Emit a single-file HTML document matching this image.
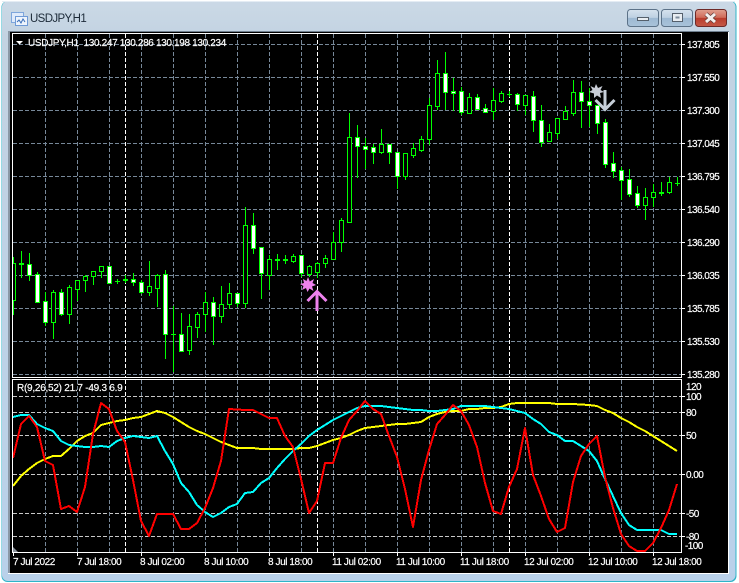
<!DOCTYPE html>
<html><head><meta charset="utf-8"><title>USDJPY,H1</title>
<style>
html,body{margin:0;padding:0;background:#fff;width:739px;height:583px;overflow:hidden}
svg{display:block;position:absolute;left:0;top:0}
text{font-family:"Liberation Sans",sans-serif;font-size:10px;fill:#fff;stroke:#fff;stroke-width:.18px;letter-spacing:-.42px}
.n{letter-spacing:-.55px}
</style></head><body>
<svg width="739" height="583" viewBox="0 0 739 583" xmlns="http://www.w3.org/2000/svg">
<defs>
<linearGradient id="tb" x1="0" y1="0" x2="0" y2="1"><stop offset="0" stop-color="#cbd9e6"/><stop offset=".06" stop-color="#c3d3e2"/><stop offset="1" stop-color="#b9d1ea"/></linearGradient>
<linearGradient id="bt" x1="0" y1="0" x2="0" y2="1"><stop offset="0" stop-color="#d6e2ee"/><stop offset=".48" stop-color="#bdd0e2"/><stop offset=".5" stop-color="#9db8d2"/><stop offset="1" stop-color="#a9c3da"/></linearGradient>
<linearGradient id="cl" x1="0" y1="0" x2="0" y2="1"><stop offset="0" stop-color="#e0a090"/><stop offset=".48" stop-color="#cf6a58"/><stop offset=".5" stop-color="#b93c2c"/><stop offset="1" stop-color="#c55a48"/></linearGradient>
<clipPath id="main"><rect x="13" y="34" width="668" height="343"/></clipPath>
<clipPath id="sub"><rect x="13" y="380" width="668" height="172"/></clipPath>
</defs>
<rect x="1.5" y="1" width="735" height="581" rx="6" fill="#2fb4c8"/>
<rect x="2" y="1" width="733.5" height="580" rx="6" fill="url(#tb)"/>
<rect x="2" y="1" width="733" height="1" fill="#e4ecf4"/>
<rect x="8" y="31" width="721" height="543" fill="#fff"/>
<rect x="8" y="31" width="721" height="1" fill="#6f7f8f"/>
<rect x="8" y="31" width="2" height="542" fill="#8a98a6"/>
<rect x="10" y="32" width="718" height="541" fill="#000"/>

<!-- title icon -->
<rect x="11.5" y="12.5" width="12" height="10" fill="#dfeafa" stroke="#7ea6dc"/>
<rect x="15.5" y="16.5" width="12" height="9" fill="#eef4fc" stroke="#6f9ad6"/>
<path d="M17 22l2-2 2 3 2-4 2 3" fill="none" stroke="#3a6eb8" stroke-width="1"/>
<text x="30" y="22" style="font-size:11.5px;fill:#1c2a38;stroke:none;letter-spacing:-.63px">USDJPY,H1</text>

<!-- window buttons -->
<rect x="627.5" y="9.5" width="31" height="17" rx="3" fill="url(#bt)" stroke="#5c7288"/>
<rect x="637.5" y="17.5" width="11" height="3" fill="#e8edf2" stroke="#55606c"/>
<rect x="661.5" y="9.5" width="31" height="17" rx="3" fill="url(#bt)" stroke="#5c7288"/>
<rect x="672.5" y="13.5" width="10" height="8" fill="#e8edf2" stroke="#55606c"/>
<rect x="675.5" y="16.5" width="4" height="2" fill="#7d8c9c"/>
<rect x="695.5" y="9.5" width="31" height="17" rx="3" fill="url(#cl)" stroke="#6e2a28"/>
<path d="M706 14l9 8M715 14l-9 8" stroke="#5c3a36" stroke-width="4.4" fill="none"/>
<path d="M706 14l9 8M715 14l-9 8" stroke="#f4f0ee" stroke-width="3" fill="none"/>

<!-- main grid -->
<g shape-rendering="crispEdges" fill="none" stroke-width="1">
<path clip-path="url(#main)" stroke="#778899" stroke-dasharray="4 2" d="M13 44.5H681M13 77.5H681M13 110.5H681M13 143.5H681M13 176.5H681M13 209.5H681M13 242.5H681M13 275.5H681M13 308.5H681M13 341.5H681M13 374.5H681M45.5 34V377M77.5 34V377M109.5 34V377M141.5 34V377M173.5 34V377M205.5 34V377M237.5 34V377M269.5 34V377M301.5 34V377M333.5 34V377M365.5 34V377M397.5 34V377M429.5 34V377M461.5 34V377M493.5 34V377M525.5 34V377M557.5 34V377M589.5 34V377M621.5 34V377M653.5 34V377"/>
<path clip-path="url(#main)" stroke="#fff" stroke-dasharray="4 2" d="M125.5 34V377M317.5 34V377M509.5 34V377"/>
<path clip-path="url(#sub)" stroke="#c8c8c8" stroke-dasharray="4 2" d="M13 396.5H681M13 412.5H681M13 435.5H681M13 474.5H681M13 513.5H681M13 536.5H681"/>
<path clip-path="url(#sub)" stroke="#778899" stroke-dasharray="4 2" d="M45.5 380V552M77.5 380V552M109.5 380V552M141.5 380V552M173.5 380V552M205.5 380V552M237.5 380V552M269.5 380V552M301.5 380V552M333.5 380V552M365.5 380V552M397.5 380V552M429.5 380V552M461.5 380V552M493.5 380V552M525.5 380V552M557.5 380V552M589.5 380V552M621.5 380V552M653.5 380V552"/>
<path clip-path="url(#sub)" stroke="#fff" stroke-dasharray="4 2" d="M125.5 380V552M317.5 380V552M509.5 380V552"/>

<!-- wicks -->
<g clip-path="url(#main)">
<path stroke="#0f0" d="M13.5 257V315M21.5 251V278M29.5 253V281M37.5 272V303M45.5 292V326M53.5 290V339M61.5 289V316M69.5 285V324M77.5 280V301M85.5 275V292M93.5 271V285M101.5 266V278M109.5 266V283M117.5 279V284M115 281.5H120M125.5 275V283M133.5 273V286M141.5 280V294M149.5 261V296M157.5 274V307M165.5 270V359M173.5 306V372M171 334.5H176M181.5 313V352M189.5 314V355M197.5 312V338M205.5 292V332M213.5 297V345M221.5 286V323M229.5 283V309M237.5 293V307M245.5 207V308M253.5 213V254M261.5 247V299M269.5 255V290M277.5 254V270M285.5 255V264M293.5 254V263M301.5 255V277M309.5 265V277M317.5 262V278M325.5 255V268M333.5 232V259M341.5 218V252M349.5 113V222M357.5 125V178M365.5 138V169M373.5 144V164M381.5 129V154M389.5 144V164M397.5 152V189M405.5 153V180M413.5 143V158M421.5 136V152M429.5 98V145M437.5 60V110M445.5 52V110M453.5 78V111M461.5 87V115M469.5 93V113M477.5 94V109M485.5 104V113M493.5 88V120M501.5 91V103M509.5 91V97M507 94.5H512M517.5 93V111M525.5 95V115M533.5 91V132M541.5 105V147M549.5 124V142M557.5 118V139M565.5 106V119M573.5 80V116M581.5 81V128M589.5 88V127M597.5 105V134M605.5 119V168M613.5 152V178M621.5 167V200M629.5 169V197M637.5 186V208M645.5 188V220M653.5 184V207M661.5 182V196M669.5 177V194M677.5 177V186M675 183.5H680"/>
<!-- bull bodies -->
<path stroke="#0f0" fill="#000" d="M11.5 263.5h4v37h-4zM51.5 292.5h4v30h-4zM67.5 287.5h4v27h-4zM75.5 280.5h4v9h-4zM83.5 276.5h4v4h-4zM91.5 271.5h4v5h-4zM99.5 266.5h4v5h-4zM147.5 286.5h4v6h-4zM155.5 275.5h4v13h-4zM187.5 326.5h4v24h-4zM195.5 314.5h4v13h-4zM203.5 302.5h4v12h-4zM219.5 304.5h4v12h-4zM227.5 293.5h4v11h-4zM243.5 225.5h4v78h-4zM267.5 259.5h4v16h-4zM291.5 256.5h4v5h-4zM307.5 266.5h4v8h-4zM315.5 263.5h4v9h-4zM323.5 258.5h4v5h-4zM331.5 242.5h4v17h-4zM339.5 220.5h4v22h-4zM347.5 137.5h4v85h-4zM379.5 144.5h4v8h-4zM403.5 153.5h4v23h-4zM411.5 148.5h4v7h-4zM419.5 139.5h4v11h-4zM427.5 105.5h4v34h-4zM435.5 73.5h4v33h-4zM467.5 97.5h4v16h-4zM491.5 100.5h4v11h-4zM499.5 93.5h4v8h-4zM523.5 95.5h4v10h-4zM547.5 132.5h4v9h-4zM555.5 118.5h4v15h-4zM563.5 111.5h4v8h-4zM571.5 92.5h4v21h-4zM643.5 197.5h4v8h-4zM651.5 192.5h4v5h-4zM667.5 182.5h4v10h-4zM19.5 263.5h4v1h-4zM123.5 279.5h4v1h-4zM275.5 259.5h4v1h-4zM283.5 259.5h4v1h-4zM659.5 192.5h4v1h-4z"/>
<!-- bear bodies -->
<path stroke="#0f0" fill="#fff" d="M27.5 264.5h4v11h-4zM35.5 274.5h4v28h-4zM43.5 301.5h4v21h-4zM59.5 292.5h4v22h-4zM107.5 266.5h4v17h-4zM131.5 279.5h4v3h-4zM139.5 282.5h4v10h-4zM163.5 274.5h4v60h-4zM179.5 334.5h4v17h-4zM211.5 302.5h4v14h-4zM235.5 293.5h4v10h-4zM251.5 225.5h4v23h-4zM259.5 247.5h4v26h-4zM299.5 255.5h4v18h-4zM355.5 137.5h4v9h-4zM363.5 146.5h4v3h-4zM371.5 147.5h4v5h-4zM387.5 144.5h4v8h-4zM395.5 152.5h4v24h-4zM443.5 73.5h4v19h-4zM451.5 91.5h4v2h-4zM459.5 91.5h4v21h-4zM475.5 97.5h4v12h-4zM483.5 108.5h4v4h-4zM515.5 94.5h4v10h-4zM531.5 96.5h4v24h-4zM539.5 120.5h4v22h-4zM579.5 92.5h4v9h-4zM587.5 101.5h4v4h-4zM595.5 105.5h4v18h-4zM603.5 122.5h4v42h-4zM611.5 163.5h4v8h-4zM619.5 170.5h4v10h-4zM627.5 179.5h4v15h-4zM635.5 193.5h4v12h-4z"/>
</g>

<!-- frames -->
<path stroke="#fff" d="M12.5 33.5H681.5V377.5H12.5ZM12.5 379.5H681.5V552.5H12.5Z"/>
<!-- axis ticks -->
<path stroke="#fff" d="M682 44.5h3M682 77.5h3M682 110.5h3M682 143.5h3M682 176.5h3M682 209.5h3M682 242.5h3M682 275.5h3M682 308.5h3M682 341.5h3M682 374.5h3M682 396.5h3M682 412.5h3M682 435.5h3M682 474.5h3M682 513.5h3M682 536.5h3M13.5 553v3M77.5 553v3M141.5 553v3M205.5 553v3M269.5 553v3M333.5 553v3M397.5 553v3M461.5 553v3M525.5 553v3M589.5 553v3M653.5 553v3"/>
</g>

<!-- indicator lines -->
<g clip-path="url(#sub)" fill="none" stroke-width="2" stroke-linejoin="round" shape-rendering="crispEdges">
<path stroke="#ff0" d="M13 486L21 476L29 469L37 463L45 459L53 456L61 456L69 449L77 441L85 436L93 433L101 425L109 423L117 421L125 420L133 418L141 417L149 414L157 411L165 413L173 417L181 422L189 427L197 431L205 434L213 438L221 442L229 445L237 448L245 448L253 448L261 449L293 449L301 448L309 448L317 446L325 443L333 440L341 438L349 435L357 431L365 428L373 427L381 426L389 425L397 424L405 424L413 423L421 422L429 417L437 414L445 412L453 411L461 411L469 409L477 409L485 408L493 408L501 407L509 404L517 403L549 403L557 404L573 404L589 405L597 406L605 410L613 413L621 418L629 422L637 427L645 431L653 436L661 441L669 446L677 451"/>
<path stroke="#0ff" d="M13 417L21 415L29 415L37 424L45 428L53 431L61 441L69 445L77 446L85 447L93 447L101 446L109 447L117 441L125 438L133 436L141 437L149 438L157 436L165 451L173 464L181 483L189 492L197 505L205 512L213 517L221 513L229 507L237 504L245 493L253 492L261 483L269 478L277 468L285 459L293 451L301 444L309 436L317 430L325 425L333 420L341 416L349 412L357 408L365 406L381 406L389 407L397 408L405 409L413 410L421 410L429 411L437 411L445 410L453 409L461 406L485 406L493 407L501 408L509 409L517 411L525 413L533 419L541 424L549 432L557 435L565 441L573 441L581 446L589 451L597 461L605 479L613 496L621 513L629 525L637 530L661 530L669 534L677 534"/>
<path stroke="#f00" d="M13 458L21 424L29 416L37 427L45 461L53 465L61 509L69 506L77 512L85 487L93 434L101 403L109 409L117 431L125 442L133 480L141 521L149 536L157 514L173 514L181 529L189 529L197 523L205 508L213 488L221 461L229 409L245 410L253 410L261 414L269 418L277 418L285 436L293 447L301 479L309 513L317 501L325 463L333 463L341 438L349 420L357 411L365 401L373 409L381 414L389 436L397 457L405 489L413 527L421 480L429 450L437 424L445 415L453 405L461 411L469 425L477 447L485 483L493 511L501 514L509 487L517 469L525 428L533 475L541 496L549 519L557 532L565 528L573 482L581 456L589 444L597 436L605 477L613 508L621 534L629 546L637 551L645 551L653 543L661 528L669 510L677 484"/>
</g>

<!-- markers -->
<polygon points="308,277 309.8,281.5 314,279 312.5,283 316,285 312,286.5 313.5,291 309.5,288.5 307.5,292 306,288 302,290 303.5,286 300,284 304,283 303,279 306.5,281" fill="#ee82ee"/>
<path d="M307.5 301L317 291.5L326.5 301M317 293V311" fill="none" stroke="#ee82ee" stroke-width="3"/>
<polygon points="596,84 598,88 602.5,86 600.5,90 604,92 600,93 601,98 597,95.5 594,98 594,93.5 589,92 592.5,90 590.5,86 594.5,88" fill="#c8ccd6"/>
<path d="M595.5 100L605 109.5L614.5 100M605 90V108" fill="none" stroke="#c6ced8" stroke-width="3"/>

<polygon points="16,41 23,41 19.5,44.5" fill="#fff"/>
<polygon points="13,547 18,552 13,552" fill="#8a929c"/>

<!-- texts -->
<text x="28" y="46" style="letter-spacing:-.34px" xml:space="preserve">USDJPY,H1  130.247 130.286 130.198 130.234</text>
<text x="17" y="391" style="letter-spacing:-.25px">R(9,26,52) 21.7 -49.3 6.9</text>

<text class="n" x="687" y="48">137.805</text>
<text class="n" x="687" y="81">137.550</text>
<text class="n" x="687" y="114">137.300</text>
<text class="n" x="687" y="147">137.045</text>
<text class="n" x="687" y="180">136.795</text>
<text class="n" x="687" y="213">136.540</text>
<text class="n" x="687" y="246">136.290</text>
<text class="n" x="687" y="279">136.035</text>
<text class="n" x="687" y="312">135.785</text>
<text class="n" x="687" y="345">135.530</text>
<text class="n" x="687" y="378">135.280</text>
<text class="n" x="686" y="390">120</text>
<text class="n" x="686" y="400">100</text>
<text class="n" x="686" y="416">80</text>
<text class="n" x="686" y="439">50</text>
<text class="n" x="686" y="478">0.00</text>
<text class="n" x="686" y="517">-50</text>
<text class="n" x="686" y="540">-80</text>
<text class="n" x="685" y="549">-100</text>

<text x="13" y="565">7 Jul 2022</text>
<text x="77" y="565">7 Jul 18:00</text>
<text x="140" y="565">8 Jul 02:00</text>
<text x="204" y="565">8 Jul 10:00</text>
<text x="268" y="565">8 Jul 18:00</text>
<text x="332" y="565">11 Jul 02:00</text>
<text x="396" y="565">11 Jul 10:00</text>
<text x="460" y="565">11 Jul 18:00</text>
<text x="524" y="565">12 Jul 02:00</text>
<text x="588" y="565">12 Jul 10:00</text>
<text x="652" y="565">12 Jul 18:00</text>
</svg>
</body></html>
